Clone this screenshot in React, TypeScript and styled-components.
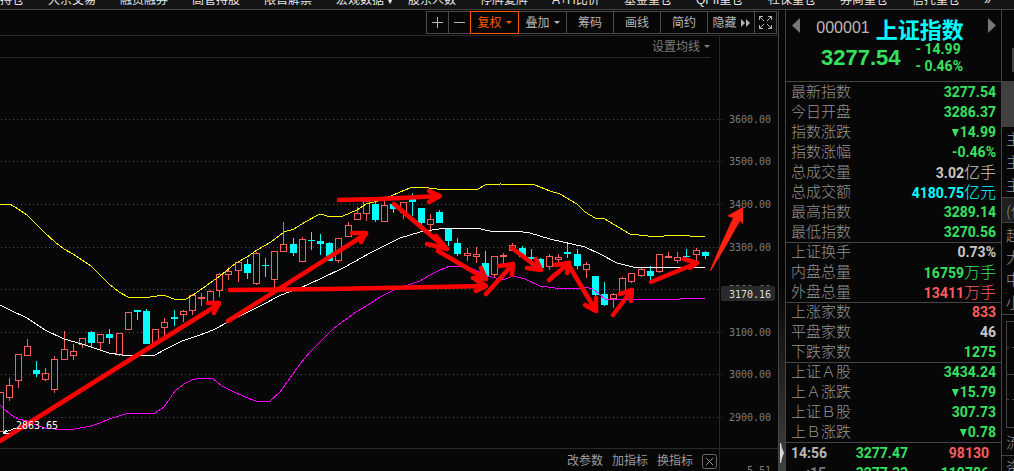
import React from "react";
import styled, { createGlobalStyle } from "styled-components";

const C = {
  bg: "#070707",
  line: "#2a2a2a",
  edge: "#444444",
  label: "#7d7d7d",
  name: "#949494",
  text: "#c8c8c8",
  green: "#38e060",
  red: "#ff5c5c",
  cyan: "#00ffff",
  orange: "#ff5a00",
};

const cjk = '"Noto Sans CJK SC", sans-serif';

const GlobalStyle = createGlobalStyle`
  html, body { margin: 0; background: ${C.bg}; }
  body { font: 12px/16px "Liberation Sans", ${cjk}; color: ${C.text}; overflow: hidden; }
  *, *::before, *::after { box-sizing: border-box; }
  button { font: inherit; color: inherit; background: none; border: 0; padding: 0; margin: 0; }
`;

const Page = styled.div`
  display: flex;
  flex-direction: column;
  height: 100vh;
  overflow: hidden;
`;

const Nav = styled.nav`
  flex: none;
  display: flex;
  align-items: flex-end;
  height: 10px;
  padding-bottom: 2px;
  gap: 24px;
  overflow: hidden;
  background: #141414;
  border-bottom: 1px solid ${C.edge};
`;

const NavLink = styled.a<{ $short?: boolean }>`
  flex: none;
  width: ${(p) => (p.$short ? 24 : 48)}px;
  font: 12px/14px "Liberation Sans", ${cjk};
  color: #e6e6e6;
  text-decoration: none;
  white-space: nowrap;
`;

const Main = styled.main`
  flex: 1;
  min-height: 0;
  display: grid;
  grid-template-columns: minmax(0, 1fr) 6px 217px 12px;
`;

const ChartColumn = styled.section`
  display: flex;
  flex-direction: column;
  min-height: 0;
  overflow: hidden;
  border-right: 1px solid ${C.edge};
`;

const Toolbar = styled.div`
  flex: none;
  display: flex;
  justify-content: flex-end;
  padding: 1px 1px 1px 0;
  border-bottom: 1px solid ${C.line};
`;

const toolWidths = { icon: 23, text: 48, menu: 49 };

const ToolButton = styled.button<{ $size: keyof typeof toolWidths; $active?: boolean }>`
  display: flex;
  align-items: center;
  justify-content: center;
  gap: 4px;
  width: ${(p) => toolWidths[p.$size]}px;
  height: 23px;
  border: 1px solid ${(p) => (p.$active ? C.orange : "#4a4a4a")};
  color: ${(p) => (p.$active ? C.orange : "#b4b4b4")};
  position: relative;
  z-index: ${(p) => (p.$active ? 1 : 0)};
  white-space: nowrap;
  & + & { margin-left: -1px; }
`;

const Row = styled.div`
  flex: none;
  display: flex;
`;

const MaBar = styled.div`
  flex: 1;
  display: flex;
  justify-content: flex-end;
  height: 22px;
  margin-right: 9px;
  border-bottom: 1px solid ${C.line};
`;

const MaButton = styled.button`
  display: flex;
  align-items: center;
  gap: 4px;
  color: ${C.label};
`;

const AxisCell = styled.div`
  width: 59px;
  border-left: 1px solid ${C.line};
  padding: 16px 7px 0 0;
  text-align: right;
  font: 10px/12px "DejaVu Sans Mono", monospace;
  color: ${C.label};
  overflow: hidden;
`;

const ChartSvg = styled.svg`
  flex: none;
  display: block;
  width: 100%;
  height: auto;
`;

const Footer = styled.div`
  flex: 1;
  display: flex;
  min-height: 0;
  border-top: 1px solid ${C.line};
`;

const Indicators = styled.div`
  flex: 1;
  display: flex;
  justify-content: flex-end;
  align-items: flex-start;
  gap: 9px;
  padding: 4px 2px 0 0;
  color: #9a9a9a;
  button { display: flex; align-items: center; height: 16px; }
`;

const Splitter = styled.div`
  display: flex;
  flex-direction: column;
  justify-content: flex-end;
  padding: 0 0 8px 1px;
  background: linear-gradient(#070707 60%, #404040);
`;

const Quote = styled.aside`
  border: solid ${C.edge};
  border-width: 0 1px;
  overflow: hidden;
`;

const QuoteHead = styled.header`
  height: 72px;
  padding: 4px 5px 0 6px;
  border-bottom: 1px solid ${C.edge};
`;

const TitleRow = styled.div`
  display: flex;
  align-items: center;
  justify-content: space-between;
  height: 27px;
`;

const Title = styled.h1`
  display: flex;
  align-items: center;
  gap: 6px;
  margin: 0;
  padding-right: 8px;
  font: 16px/26px "Liberation Sans", sans-serif;
  color: #c0b8b0;
  strong { font: bold 22px/26px ${cjk}; color: ${C.cyan}; }
`;

const PriceRow = styled.div`
  display: flex;
  justify-content: center;
  align-items: center;
  gap: 15px;
  padding-right: 4px;
  color: ${C.green};
  strong { font: bold 22px/34px "Liberation Sans", sans-serif; }
`;

const Change = styled.div`
  font: bold 14px/17px Roboto, sans-serif;
`;

const DataTable = styled.table`
  width: 100%;
  border-collapse: collapse;
  th, td { height: 20px; padding: 0 5px; line-height: 18px; white-space: nowrap; }
  th { text-align: left; font: 300 15px/18px "Liberation Sans", ${cjk}; color: ${C.name}; }
  td { text-align: right; }
  tbody + tbody tr:first-child > * { box-shadow: inset 0 1px ${C.edge}; }
`;

const Value = styled.td<{ $color: string }>`
  font: bold 14px/18px Roboto, ${cjk};
  color: ${(p) => p.$color};
  span { font: 300 16px/16px ${cjk}; }
`;

const Ticks = styled.table`
  width: 100%;
  table-layout: fixed;
  border-collapse: collapse;
  border-top: 1px solid ${C.edge};
  td { height: 20px; padding: 0 12px 0 5px; line-height: 18px; text-align: right; }
  td:first-child { width: 40px; padding-right: 0; }
  td:nth-child(2) { width: 94px; }
`;

const Strip = styled.div`
  display: flex;
  flex-direction: column;
  overflow: hidden;
  font: 300 15px/22px ${cjk};
  color: ${C.name};
`;

const StripTop = styled.div`
  flex: none;
  display: flex;
  justify-content: flex-end;
  height: 71px;
  padding-top: 38px;
  &::after { content: ""; width: 2px; height: 24px; background: #444; }
`;

const StripBlock = styled.div`
  flex: none;
  height: 46px;
  background: #404040;
`;

const StripCell = styled.div<{ $h: number; $line?: boolean; $fill?: boolean }>`
  flex: none;
  height: ${(p) => p.$h}px;
  line-height: ${(p) => p.$h}px;
  padding-left: 4px;
  white-space: nowrap;
  background: ${(p) => (p.$fill ? "#202020" : "transparent")};
  border-top: ${(p) => (p.$line ? 1 : 0)}px solid ${C.edge};
`;

const MiniChart = styled.svg`
  flex: none;
  display: block;
`;

type Candle = [x: number, high: number, top: number, bottom: number, low: number, kind: "u" | "d"];

const candles: Candle[] = [
  [0, 392, 392, 432, 432, "u"], [9, 378, 385, 398, 401, "u"], [18, 354, 354, 381, 388, "u"],
  [27, 339, 346, 356, 356, "u"], [36, 361, 370, 374, 377, "d"], [45, 368, 373, 380, 381, "u"],
  [54, 356, 359, 390, 393, "u"], [64, 331, 349, 360, 360, "u"], [73, 344, 351, 356, 360, "u"],
  [82, 338, 338, 345, 348, "u"], [91, 331, 332, 343, 347, "d"], [100, 334, 334, 343, 350, "u"],
  [109, 329, 334, 338, 344, "d"], [119, 333, 333, 355, 356, "u"], [128, 312, 312, 330, 330, "u"],
  [137, 310, 310, 312, 320, "d"], [146, 309, 311, 344, 344, "d"], [155, 329, 329, 344, 344, "u"],
  [164, 318, 322, 328, 337, "u"], [174, 310, 317, 319, 326, "d"], [183, 310, 311, 315, 322, "u"],
  [192, 294, 295, 311, 315, "u"], [201, 293, 297, 299, 306, "u"], [210, 290, 291, 302, 302, "u"],
  [219, 273, 274, 291, 297, "u"], [228, 267, 271, 275, 280, "u"], [238, 261, 262, 271, 282, "u"],
  [247, 259, 264, 273, 279, "d"], [256, 252, 253, 284, 285, "u"], [265, 258, 265, 266, 277, "d"],
  [274, 251, 251, 280, 288, "u"], [283, 222, 244, 252, 252, "u"], [293, 238, 244, 253, 256, "d"],
  [302, 237, 239, 262, 262, "u"], [311, 232, 240, 241, 250, "d"], [320, 234, 241, 244, 255, "d"],
  [329, 242, 243, 261, 261, "d"], [338, 238, 238, 261, 263, "u"], [348, 222, 225, 237, 237, "u"],
  [357, 207, 213, 220, 220, "u"], [366, 200, 201, 214, 221, "u"], [375, 202, 204, 220, 222, "d"],
  [384, 200, 205, 222, 222, "u"], [393, 202, 204, 209, 213, "d"], [403, 202, 202, 213, 219, "u"],
  [412, 193, 199, 202, 216, "d"], [421, 208, 208, 223, 227, "d"], [430, 214, 219, 225, 233, "u"],
  [439, 210, 212, 223, 223, "d"], [448, 228, 229, 241, 246, "d"], [457, 238, 243, 254, 256, "d"],
  [467, 248, 253, 256, 261, "u"], [476, 247, 254, 257, 263, "u"], [485, 251, 263, 277, 277, "d"],
  [494, 256, 256, 275, 277, "u"], [503, 253, 255, 257, 266, "u"], [512, 243, 245, 251, 251, "u"],
  [522, 246, 248, 257, 257, "d"], [531, 249, 257, 259, 266, "d"], [540, 258, 259, 268, 268, "d"],
  [549, 254, 256, 267, 270, "u"], [558, 254, 257, 260, 262, "u"], [567, 243, 252, 254, 258, "d"],
  [577, 249, 254, 266, 269, "d"], [586, 262, 264, 270, 278, "u"], [595, 276, 276, 295, 298, "d"],
  [604, 282, 294, 305, 306, "d"], [613, 293, 294, 299, 308, "u"], [622, 277, 278, 293, 295, "u"],
  [631, 273, 273, 282, 283, "u"], [641, 267, 269, 276, 277, "u"], [650, 266, 271, 276, 281, "d"],
  [659, 254, 254, 272, 273, "u"], [668, 252, 256, 258, 258, "u"], [677, 252, 257, 261, 263, "u"],
  [686, 249, 256, 257, 261, "d"], [696, 248, 250, 255, 262, "u"], [705, 251, 252, 256, 259, "d"],
];

const upperBand =
  "0,205 10,204 18,209 27,215 36,224 45,233 55,242 64,249 73,254 91,266 100,275 109,284 119,292 128,297 150,297 164,295 176,300 186,299 193,295 203,288 220,276 236,263 247,257 257,250 271,242 284,232 294,229 305,222 320,214 331,217 343,216 357,210 366,204 378,201 391,196 400,192 410,188 420,187 437,189 455,190 478,189 485,185 500,184 535,185 550,191 560,194 577,204 585,212 595,218 605,219 618,227 630,234 648,236 664,236 670,235 682,235 698,237 705,236";
const middleBand =
  "0,305 10,310 27,318 45,330 64,339 82,344 91,347 109,353 122,355 155,355 164,350 182,341 200,335 213,330 230,321 262,305 281,295 300,288 320,279 345,267 370,253 400,238 420,232 445,228 476,228 490,231 505,232 515,231 530,233 550,239 585,247 600,254 617,263 633,267 645,268 664,267 705,267";
const lowerBand =
  "0,405 4,409 10,414 18,419 27,421 36,425 45,428 55,429 75,429 91,426 100,423 109,419 119,416 128,413 155,413 164,407 175,391 184,384 192,380 200,378 212,378 222,386 232,391 245,397 256,401 270,401 280,392 290,378 300,364 310,352 322,340 333,329 345,320 356,312 368,305 380,297 394,290 408,285 420,281 430,275 440,270 450,266 460,266 470,268 488,276 500,279 505,279 513,276 525,279 540,286 555,288 580,289 585,287 593,289 605,299 612,300 628,299 680,299 684,298 705,298";

const arrows = [
  "M0,441L219,304M208,303H219L214,313",
  "M228,321L366,234M352,233H366L361,242",
  "M230,290L330,289L486,286M476,280L486,286L476,291",
  "M339,200L380,199L440,196M429,191L440,196L429,202",
  "M394,204L447,249M436,236L447,249L427,244",
  "M438,251L486,279M481,268L486,279L473,278",
  "M486,294L513,264M499,266L513,264L512,275",
  "M512,248L541,270M536,259L541,270L527,268",
  "M549,280L569,263M555,265L569,263L567,273",
  "M568,264L596,311M596,298V311L585,305",
  "M613,315L632,290M620,294L632,290L631,301",
  "M651,282L697,263M684,259L697,263L690,268",
];

const levels: [number, string][] = [
  [119, "3600.00"], [161, "3500.00"], [204, "3400.00"], [247, "3300.00"],
  [289, "3200.00"], [332, "3100.00"], [374, "3000.00"], [417, "2900.00"],
];

function CandleMark({ c }: { c: Candle }) {
  const [x, high, top, bottom, low, kind] = c;
  const color = kind === "u" ? C.red : C.cyan;
  const solid = kind === "d" || bottom - top < 3;
  return (
    <g stroke={color} fill={color}>
      {top > high && <path d={`M${x + 0.5},${high}V${top}`} />}
      {low > bottom && <path d={`M${x + 0.5},${bottom}V${low}`} />}
      {solid ? (
        <rect x={x - 3} y={top} width={7} height={bottom - top} stroke="none" />
      ) : (
        <rect x={x - 2.5} y={top + 0.5} width={6} height={bottom - top - 1} fill="none" />
      )}
    </g>
  );
}

function PriceChart() {
  return (
    <ChartSvg viewBox="0 58 778 390" role="img" aria-label="上证指数 K线图">
      <g shapeRendering="crispEdges" fill="none">
        <path d="M719.5,58V448" stroke={C.line} />
        {levels.map(([y]) => (
          <path key={y} d={`M1,${y + 0.5}H722`} stroke="#505050" strokeDasharray="1 3" />
        ))}
        {candles.map((c) => (
          <CandleMark key={c[0]} c={c} />
        ))}
        <polyline points={upperBand} stroke="#ffff00" />
        <polyline points={middleBand} stroke="#ffffff" />
        <polyline points={lowerBand} stroke="#ff00ff" />
      </g>
      <g fontFamily='"DejaVu Sans Mono", monospace' fontSize="10" fill={C.label}>
        {levels.map(([y, label]) => (
          <text key={y} x="729" y={y + 4}>{label}</text>
        ))}
        <rect x="721" y="286" width="54" height="15" rx="2" fill="#2a2a2a" />
        <text x="729" y="298" fill="#dcdcdc">3170.16</text>
      </g>
      <g fill="none" stroke="#ff0000" strokeWidth="4.5" strokeLinecap="round" strokeLinejoin="round">
        {arrows.map((d) => (
          <path key={d} d={d} />
        ))}
      </g>
      <path d="M743,207L727,216L733,218L721,244L710,270L711,271L726,246L740,221L743,224Z" fill="#ff2010" />
      <path d="M16,428L3,433M3,433L7,430M3,433H9" stroke="#fff" fill="none" shapeRendering="crispEdges" />
      <text x="16" y="429" fontFamily='"DejaVu Sans Mono", monospace' fontSize="10" fill="#fff">2863.65</text>
    </ChartSvg>
  );
}

const Caret = () => (
  <svg width="6" height="3" viewBox="0 0 6 3" fill="currentColor" aria-hidden="true">
    <path d="M0,0H6L3,3Z" />
  </svg>
);

type QuoteRow = [label: string, value: string, color: string, unit?: string];

const quoteGroups: QuoteRow[][] = [
  [
    ["最新指数", "3277.54", C.green],
    ["今日开盘", "3286.37", C.green],
    ["指数涨跌", "▼14.99", C.green],
    ["指数涨幅", "-0.46%", C.green],
    ["总成交量", "3.02", C.text, "亿手"],
    ["总成交额", "4180.75", C.cyan, "亿元"],
    ["最高指数", "3289.14", C.green],
    ["最低指数", "3270.56", C.green],
  ],
  [
    ["上证换手", "0.73%", C.text],
    ["内盘总量", "16759", C.green, "万手"],
    ["外盘总量", "13411", C.red, "万手"],
  ],
  [
    ["上涨家数", "833", C.red],
    ["平盘家数", "46", C.text],
    ["下跌家数", "1275", C.green],
  ],
  [
    ["上证Ａ股", "3434.24", C.green],
    ["上Ａ涨跌", "▼15.79", C.green],
    ["上证Ｂ股", "307.73", C.green],
    ["上Ｂ涨跌", "▼0.78", C.green],
  ],
];

const Down = styled.i`
  display: inline-block;
  width: 7px;
  height: 8px;
  margin-right: 1px;
  background: currentColor;
  clip-path: polygon(0 0, 100% 0, 50% 100%);
`;

const navItems = [
  "大宗交易", "融资融券", "高管持股", "限售解禁", "宏观数据 ▾", "股东人数", "停牌复牌",
  "A+H比价", "基金重仓", "QFII重仓", "社保重仓", "券商重仓", "信托重仓",
];

export default function App() {
  return (
    <Page>
      <GlobalStyle />
      <Nav>
        <NavLink href="#" $short>持仓</NavLink>
        {navItems.map((item) => (
          <NavLink key={item} href="#">{item}</NavLink>
        ))}
        <NavLink href="#" $short>»</NavLink>
      </Nav>
      <Main>
        <ChartColumn>
          <Toolbar>
            <ToolButton $size="icon" aria-label="放大">
              <svg width="11" height="11" stroke="currentColor" shapeRendering="crispEdges"><path d="M0,5.5H11M5.5,0V11" /></svg>
            </ToolButton>
            <ToolButton $size="icon" aria-label="缩小">
              <svg width="11" height="11" stroke="currentColor" shapeRendering="crispEdges"><path d="M0,5.5H11" /></svg>
            </ToolButton>
            <ToolButton $size="menu" $active>复权 <Caret /></ToolButton>
            <ToolButton $size="menu">叠加 <Caret /></ToolButton>
            <ToolButton $size="text">筹码</ToolButton>
            <ToolButton $size="text">画线</ToolButton>
            <ToolButton $size="text">简约</ToolButton>
            <ToolButton $size="text">
              隐藏
              <svg width="9" height="8" fill="currentColor"><path d="M0,0L4,4L0,8ZM5,0L9,4L5,8Z" /></svg>
            </ToolButton>
            <ToolButton $size="icon" aria-label="全屏">
              <svg width="13" height="13" fill="none" stroke="currentColor" shapeRendering="crispEdges">
                <path d="M0.5,4V0.5H4M9,0.5H12.5V4M12.5,9V12.5H9M4,12.5H0.5V9M1,1L5,5M12,1L8,5M12,12L8,8M1,12L5,8" />
              </svg>
            </ToolButton>
          </Toolbar>
          <Row>
            <MaBar>
              <MaButton>设置均线 <Caret /></MaButton>
            </MaBar>
            <AxisCell />
          </Row>
          <PriceChart />
          <Footer>
            <Indicators>
              <button>改参数</button>
              <button>加指标</button>
              <button>换指标</button>
              <button aria-label="关闭">
                <svg width="15" height="15" fill="none" stroke="#6a6a6a">
                  <rect x="0.5" y="0.5" width="14" height="14" rx="2" />
                  <path d="M4,4L11,11M11,4L4,11" stroke="#909090" />
                </svg>
              </button>
            </Indicators>
            <AxisCell>5.51</AxisCell>
          </Footer>
        </ChartColumn>
        <Splitter>
          <svg width="4" height="20" fill="#d8d8d8"><path d="M0,0H1L2,5L4,10L2,15L1,20H0Z" /></svg>
        </Splitter>
        <Quote>
          <QuoteHead>
            <TitleRow>
              <button aria-label="上一个">
                <svg width="8" height="15" fill="#777"><path d="M8,0V15L0,7.500Z" /></svg>
              </button>
              <Title>000001 <strong>上证指数</strong></Title>
              <button aria-label="下一个">
                <svg width="8" height="15" fill="#777"><path d="M0,0V15L8,7.500Z" /></svg>
              </button>
            </TitleRow>
            <PriceRow>
              <strong>3277.54</strong>
              <Change>
                <div>- 14.99</div>
                <div>- 0.46%</div>
              </Change>
            </PriceRow>
          </QuoteHead>
          <DataTable>
            {quoteGroups.map((group) => (
              <tbody key={group[0][0]}>
                {group.map(([label, value, color, unit]) => (
                  <tr key={label}>
                    <th scope="row">{label}</th>
                    <Value $color={color}>
                      {value.startsWith("▼") && <Down />}
                      {value.replace("▼", "")}
                      {unit && <span>{unit}</span>}
                    </Value>
                  </tr>
                ))}
              </tbody>
            ))}
          </DataTable>
          <Ticks>
            <tbody>
              <tr>
                <Value $color="#b8b8b8">14:56</Value>
                <Value $color={C.green}>3277.47</Value>
                <Value $color={C.red}>98130</Value>
              </tr>
              <tr>
                <Value $color="#777777">:15</Value>
                <Value $color={C.green}>3277.33</Value>
                <Value $color={C.green}>119786</Value>
              </tr>
            </tbody>
          </Ticks>
        </Quote>
        <Strip>
          <StripTop />
          <StripBlock />
          <StripCell $h={24}>主</StripCell>
          <StripCell $h={22}>主</StripCell>
          <StripCell $h={24}>主</StripCell>
          <StripCell $h={25} $line $fill>(亿</StripCell>
          <StripCell $h={24} $line>超</StripCell>
          <StripCell $h={22}>大</StripCell>
          <StripCell $h={22}>中</StripCell>
          <StripCell $h={24}>小</StripCell>
          <StripCell $h={7} $line />
          <MiniChart width="12" height="107" fill="none" stroke={C.edge} shapeRendering="crispEdges">
            <path d="M12,0.5H4.500V106.500H12M4,53.500H12" />
            <path d="M4,26.500H12M4,78.500H12" strokeDasharray="3 3" />
          </MiniChart>
          <StripCell $h={27}>流</StripCell>
          <StripCell $h={22} $line>资</StripCell>
        </Strip>
      </Main>
    </Page>
  );
}
